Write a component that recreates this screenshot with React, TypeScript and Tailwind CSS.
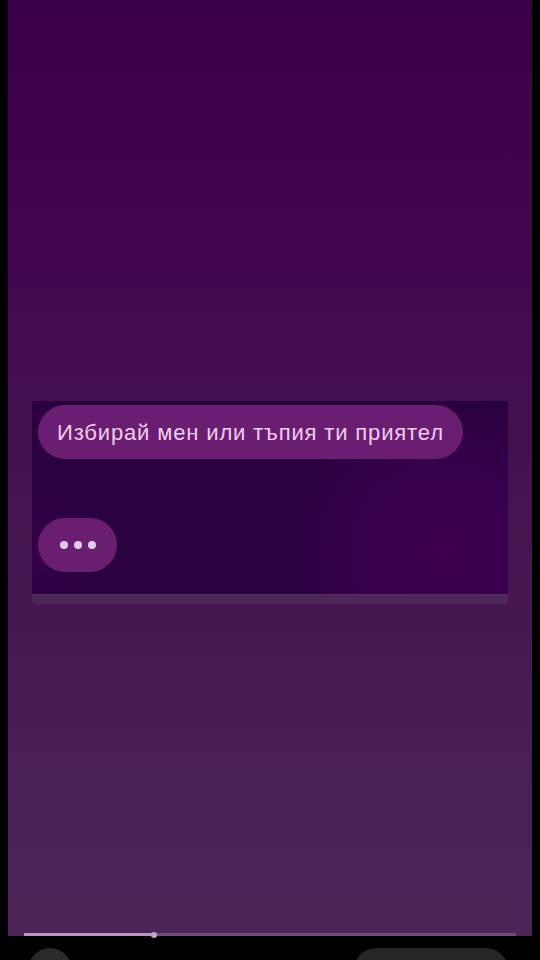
export default function App() {
  return (
    <div className="relative h-[960px] w-[540px] overflow-hidden bg-black font-['Liberation_Sans',Arial,sans-serif]">
      {/* story panel */}
      <div className="mx-2 flex h-[936px] flex-col bg-[linear-gradient(180deg,#3a0047_0%,#42064f_25%,#44104f_45%,#461852_65%,#4a2157_85%,#4d2559_100%)]">
        <div className="h-[401px]" />
        {/* card */}
        <div className="mx-6 flex flex-col">
          <div className="relative h-[193px] overflow-hidden bg-[#2a003f]">
            <div className="absolute -right-24 top-0 h-[300px] w-[320px] rounded-full bg-[radial-gradient(closest-side,#3e0052_0%,#38004d_55%,rgba(42,0,63,0)_100%)]" />
            <div className="absolute -left-20 top-20 h-[140px] w-[160px] rounded-full bg-[radial-gradient(closest-side,#35004a_0%,rgba(42,0,63,0)_100%)]" />
            <div className="relative flex flex-col items-start px-1.5 pt-1">
              <div className="flex h-[54px] items-center rounded-full bg-[#6a1e72] px-[19px] text-[22px] tracking-[0.85px] text-[#f2cdf2]">
                Избирай мен или тъпия ти приятел
              </div>
              <div className="mt-[59px] flex h-[54px] w-[79px] items-center justify-center gap-[6px] rounded-full bg-[#6a1e72]">
                <span className="h-[8px] w-[8px] rounded-full bg-[#e2cce8]" />
                <span className="h-[8px] w-[8px] rounded-full bg-[#e2cce8]" />
                <span className="h-[8px] w-[8px] rounded-full bg-[#e2cce8]" />
              </div>
            </div>
          </div>
          <div className="h-[10px] rounded-b-sm border-t border-[#553062] bg-[#4c2759]" />
        </div>
        <div className="flex-1" />
        {/* progress */}
        <div className="mx-4 flex h-[3px] items-center bg-[#6e4c7c]">
          <div className="relative h-[3px] w-[130px] bg-[#b896c6]">
            <span className="absolute -right-[3px] -top-[1.5px] h-[6px] w-[6px] rounded-full bg-[#c2a4d0]" />
          </div>
        </div>
      </div>
      {/* bottom controls peeking */}
      <div className="mt-3 flex items-start justify-between px-7">
        <div className="h-[44px] w-[44px] rounded-full bg-[#2a2a2a]" />
        <div className="mr-1 h-[44px] w-[154px] rounded-[22px] bg-[#262626]" />
      </div>
    </div>
  )
}
